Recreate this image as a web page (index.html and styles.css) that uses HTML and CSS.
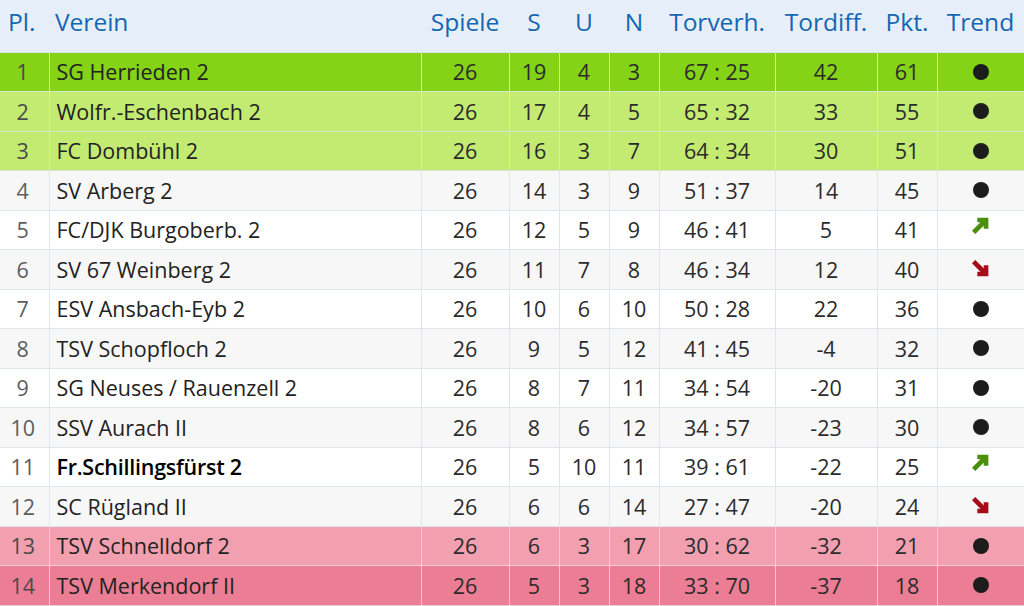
FILE: index.html
```html
<!DOCTYPE html>
<html lang="de">
<head>
<meta charset="utf-8">
<title>Tabelle</title>
<link rel="stylesheet" href="styles.css">
</head>
<body>
<table class="standings">
  <colgroup>
    <col class="c-pl"><col class="c-team"><col class="c-sp"><col class="c-s"><col class="c-u"><col class="c-n"><col class="c-tv"><col class="c-td"><col class="c-pkt"><col class="c-tr">
  </colgroup>
  <thead>
    <tr>
      <th class="h-pl">Pl.</th>
      <th class="h-team">Verein</th>
      <th>Spiele</th>
      <th>S</th>
      <th>U</th>
      <th>N</th>
      <th>Torverh.</th>
      <th>Tordiff.</th>
      <th>Pkt.</th>
      <th>Trend</th>
    </tr>
  </thead>
  <tbody>
    <tr class="up1"><td class="pl">1</td><td class="team">SG Herrieden 2</td><td>26</td><td>19</td><td>4</td><td>3</td><td>67 : 25</td><td>42</td><td>61</td><td><span class="dot"></span></td></tr>
    <tr class="up2"><td class="pl">2</td><td class="team">Wolfr.-Eschenbach 2</td><td>26</td><td>17</td><td>4</td><td>5</td><td>65 : 32</td><td>33</td><td>55</td><td><span class="dot"></span></td></tr>
    <tr class="up2"><td class="pl">3</td><td class="team">FC Dombühl 2</td><td>26</td><td>16</td><td>3</td><td>7</td><td>64 : 34</td><td>30</td><td>51</td><td><span class="dot"></span></td></tr>
    <tr class="even"><td class="pl">4</td><td class="team">SV Arberg 2</td><td>26</td><td>14</td><td>3</td><td>9</td><td>51 : 37</td><td>14</td><td>45</td><td><span class="dot"></span></td></tr>
    <tr class="odd"><td class="pl">5</td><td class="team">FC/DJK Burgoberb. 2</td><td>26</td><td>12</td><td>5</td><td>9</td><td>46 : 41</td><td>5</td><td>41</td><td><svg class="arrow up" viewBox="0 0 16 16" width="17" height="17"><path d="M1.5 14.5 L12 4" /><path d="M5 2.8 H13.2 V11" /></svg></td></tr>
    <tr class="even"><td class="pl">6</td><td class="team">SV 67 Weinberg 2</td><td>26</td><td>11</td><td>7</td><td>8</td><td>46 : 34</td><td>12</td><td>40</td><td><svg class="arrow down" viewBox="0 0 16 16" width="17" height="17"><path d="M1.5 1.5 L12 12" /><path d="M5 13.2 H13.2 V5" /></svg></td></tr>
    <tr class="odd"><td class="pl">7</td><td class="team">ESV Ansbach-Eyb 2</td><td>26</td><td>10</td><td>6</td><td>10</td><td>50 : 28</td><td>22</td><td>36</td><td><span class="dot"></span></td></tr>
    <tr class="even"><td class="pl">8</td><td class="team">TSV Schopfloch 2</td><td>26</td><td>9</td><td>5</td><td>12</td><td>41 : 45</td><td>-4</td><td>32</td><td><span class="dot"></span></td></tr>
    <tr class="odd"><td class="pl">9</td><td class="team">SG Neuses / Rauenzell 2</td><td>26</td><td>8</td><td>7</td><td>11</td><td>34 : 54</td><td>-20</td><td>31</td><td><span class="dot"></span></td></tr>
    <tr class="even"><td class="pl">10</td><td class="team">SSV Aurach II</td><td>26</td><td>8</td><td>6</td><td>12</td><td>34 : 57</td><td>-23</td><td>30</td><td><span class="dot"></span></td></tr>
    <tr class="odd own"><td class="pl">11</td><td class="team">Fr.Schillingsfürst 2</td><td>26</td><td>5</td><td>10</td><td>11</td><td>39 : 61</td><td>-22</td><td>25</td><td><svg class="arrow up" viewBox="0 0 16 16" width="17" height="17"><path d="M1.5 14.5 L12 4" /><path d="M5 2.8 H13.2 V11" /></svg></td></tr>
    <tr class="even"><td class="pl">12</td><td class="team">SC Rügland II</td><td>26</td><td>6</td><td>6</td><td>14</td><td>27 : 47</td><td>-20</td><td>24</td><td><svg class="arrow down" viewBox="0 0 16 16" width="17" height="17"><path d="M1.5 1.5 L12 12" /><path d="M5 13.2 H13.2 V5" /></svg></td></tr>
    <tr class="down1"><td class="pl">13</td><td class="team">TSV Schnelldorf 2</td><td>26</td><td>6</td><td>3</td><td>17</td><td>30 : 62</td><td>-32</td><td>21</td><td><span class="dot"></span></td></tr>
    <tr class="down2"><td class="pl">14</td><td class="team">TSV Merkendorf II</td><td>26</td><td>5</td><td>3</td><td>18</td><td>33 : 70</td><td>-37</td><td>18</td><td><span class="dot"></span></td></tr>
  </tbody>
</table>
</body>
</html>
```

FILE: styles.css
```css
html, body {
  margin: 0;
  padding: 0;
  background: #ffffff;
}

body {
  font-family: "Open Sans", "Noto Sans", sans-serif;
  overflow: hidden;
}

.standings {
  width: 1024px;
  border-collapse: collapse;
  table-layout: fixed;
}

.c-pl { width: 49px; }
.c-team { width: 372px; }
.c-sp { width: 88px; }
.c-s { width: 50px; }
.c-u { width: 50px; }
.c-n { width: 50px; }
.c-tv { width: 116px; }
.c-td { width: 102px; }
.c-pkt { width: 60px; }
.c-tr { width: 87px; }

.standings thead tr {
  background: #e5eef9;
}

.standings th {
  height: 52px;
  padding: 0 0 8px 0;
  box-sizing: border-box;
  font-size: 24.5px;
  font-weight: 400;
  color: #1466b5;
  text-shadow: 0 0 2px #ffffff, 0 0 1px #ffffff, 0 0 0.4px #1466b5;
  text-align: center;
  white-space: nowrap;
  border-bottom: 1px solid #d9e2ec;
  vertical-align: middle;
}

.standings th.h-pl {
  text-align: left;
  padding-left: 8px;
}

.standings th.h-team {
  text-align: left;
  padding-left: 6px;
}

.standings td {
  height: 39.5px;
  box-sizing: border-box;
  padding: 0;
  font-size: 21.5px;
  color: #2b2b2b;
  text-align: center;
  vertical-align: middle;
  border: 1px solid #dfe5ec;
  white-space: nowrap;
}

.standings td:first-child { border-left: none; }
.standings td:last-child { border-right: none; }

.standings td.pl {
  color: #5d5d5d;
  padding-right: 3px;
}

.standings td.team {
  text-align: left;
  padding-left: 7px;
  color: #222222;
}

.up1 { background: #84d317; }
.up2 { background: #c3eb71; }
.odd { background: #ffffff; }
.even { background: #f7f7f7; }
.down1 { background: #f2a0af; }
.down2 { background: #eb7e94; }

.up1 td, .up2 td { border-color: #d8e6cd; }
.down1 td, .down2 td { border-color: #e8ccd6; }

.up1 td.pl, .up2 td.pl, .down1 td.pl, .down2 td.pl {
  color: #4a4a4a;
}

.own td.team {
  font-weight: 600;
  letter-spacing: -0.25px;
  color: #000000;
}

.dot {
  display: block;
  width: 16px;
  height: 16px;
  margin: 0 auto;
  border-radius: 50%;
  background: #1c1c1c;
}

.arrow {
  display: block;
  margin: 0 auto;
  fill: none;
  stroke-width: 4.4;
  stroke-linecap: butt;
  stroke-linejoin: miter;
}

.arrow.up {
  stroke: #4b8f0f;
  position: relative;
  top: -4px;
}

.arrow.down {
  stroke: #a50d1a;
  position: relative;
  top: -1px;
}
```
